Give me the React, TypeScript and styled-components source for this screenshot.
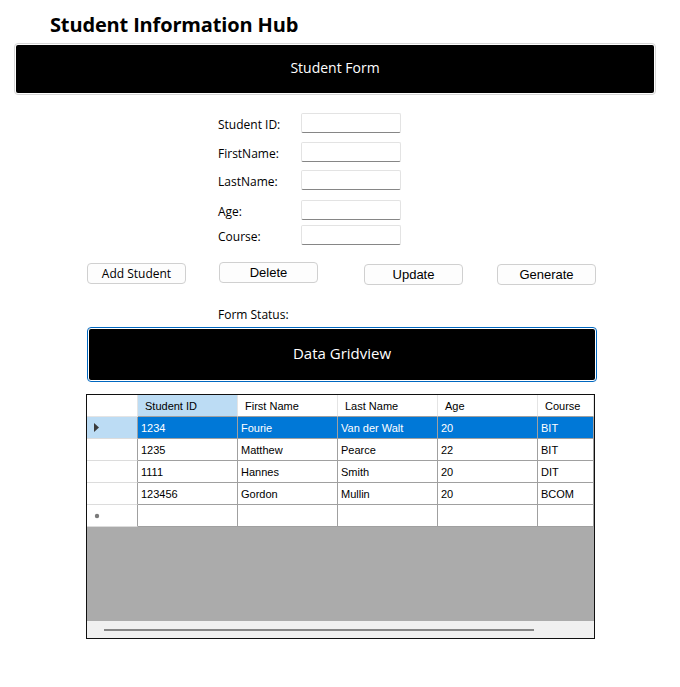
import React from "react";
import styled, { createGlobalStyle } from "styled-components";

const Global = createGlobalStyle`
  html, body { margin: 0; padding: 0; background: #ffffff; }
  body { font-family: "Open Sans", "Noto Sans", sans-serif; color: #000; }
  * { box-sizing: border-box; }
`;

const Page = styled.div`
  width: 680px;
  height: 687px;
  display: flex;
  flex-direction: column;
  align-items: flex-start;
`;

const Title = styled.h1`
  margin: 0 0 0 50px;
  height: 43px;
  padding-top: 13px;
  font-family: "Open Sans", "Noto Sans", sans-serif;
  font-weight: 700;
  font-size: 20px;
  line-height: 24px;
  letter-spacing: -0.15px;
  color: #000;
`;

const Banner = styled.div<{ $left: number; $top: number; $width: number; $height: number; $accent?: boolean }>`
  margin-left: ${(p) => p.$left}px;
  margin-top: ${(p) => p.$top}px;
  width: ${(p) => p.$width}px;
  height: ${(p) => p.$height}px;
  border: 1px solid ${(p) => (p.$accent ? "#0067c0" : "#d6d6d6")};
  border-radius: 4px;
  padding: 1px;
  background: #ffffff;
`;

const BannerInner = styled.div<{ $size: number }>`
  height: 100%;
  background: #000;
  border-radius: 2px;
  display: flex;
  align-items: center;
  justify-content: center;
  padding-bottom: 3px;
  color: #fff;
  font-family: "Open Sans", "Noto Sans", sans-serif;
  font-size: ${(p) => p.$size}px;
`;

const Fields = styled.div`
  margin-top: 17px;
  margin-left: 218px;
  display: flex;
  flex-direction: column;
`;

const FieldRow = styled.div<{ $gap: number }>`
  margin-top: ${(p) => p.$gap}px;
  display: grid;
  grid-template-columns: 83px 100px;
  align-items: center;
  height: 20px;
`;

const Label = styled.label`
  font-family: "Open Sans", "Noto Sans", sans-serif;
  font-size: 12px;
  line-height: 16px;
  padding-top: 5px;
  color: #000;
`;

const Input = styled.input`
  width: 100px;
  height: 20px;
  border: 1px solid #e3e3e3;
  border-bottom: 1px solid #868686;
  border-radius: 2px;
  background: #fff;
  outline: none;
  padding: 0 4px;
`;

const ButtonRow = styled.div`
  margin-top: 18px;
  margin-left: 87px;
  display: flex;
  align-items: flex-start;
  height: 23px;
`;

const Btn = styled.button<{ $gap: number; $dy: number; $arial?: boolean }>`
  margin-left: ${(p) => p.$gap}px;
  margin-top: ${(p) => p.$dy}px;
  width: 99px;
  height: 21px;
  border: 1px solid #d0d0d0;
  border-radius: 4px;
  background: #fdfdfd;
  color: #000;
  padding: 0;
  font-family: ${(p) => (p.$arial ? '"Liberation Sans", Arial, sans-serif' : '"Open Sans", "Noto Sans", sans-serif')};
  font-size: ${(p) => (p.$arial ? 13 : 12)}px;
  line-height: 19px;
`;

const Status = styled.div`
  margin-top: 22px;
  margin-left: 218px;
  height: 15px;
  font-family: "Open Sans", "Noto Sans", sans-serif;
  font-size: 12px;
  line-height: 15px;
`;

const GridWrap = styled.div`
  margin-top: 12px;
  margin-left: 86px;
  width: 509px;
  height: 245px;
  border: 1px solid #101010;
  display: flex;
  flex-direction: column;
  font-family: "Liberation Sans", Arial, sans-serif;
  font-size: 11px;
  overflow: hidden;
`;

const GridRow = styled.div`
  display: grid;
  grid-template-columns: 51px 100px 100px 100px 100px 1fr;
  height: 22px;
  flex: none;
`;

const HeadCell = styled.div<{ $selected?: boolean; $corner?: boolean }>`
  background: ${(p) => (p.$selected ? "#bcdcf4" : "#ffffff")};
  border-right: 1px solid #e4e4e4;
  border-bottom: 1px solid ${(p) => (p.$corner ? "#e4e4e4" : "#a0a0a0")};
  display: flex;
  align-items: center;
  padding-left: 7px;
  color: #000;
  white-space: nowrap;
`;

const RowHead = styled.div<{ $selected?: boolean }>`
  background: ${(p) => (p.$selected ? "#bcdcf4" : "#ffffff")};
  border-bottom: 1px solid #dcdcdc;
  border-right: 1px solid #a0a0a0;
  display: flex;
  align-items: center;
  padding-left: 7px;
`;

const Cell = styled.div<{ $selected?: boolean }>`
  background: ${(p) => (p.$selected ? "#0078d7" : "#ffffff")};
  color: ${(p) => (p.$selected ? "#ffffff" : "#000000")};
  border-right: 1px solid #a0a0a0;
  border-bottom: 1px solid #a0a0a0;
  display: flex;
  align-items: center;
  padding-left: 3px;
  white-space: nowrap;
  overflow: hidden;
`;

const Empty = styled.div`
  flex: 1;
  background: #ababab;
`;

const ScrollBar = styled.div`
  height: 17px;
  flex: none;
  background: #f0f0f0;
  display: flex;
  align-items: center;
  padding-left: 17px;
`;

const Thumb = styled.div`
  width: 430px;
  height: 2px;
  background: #858585;
  margin-top: 1px;
`;

const fields = [
  { label: "Student ID:", gap: 0 },
  { label: "FirstName:", gap: 9 },
  { label: "LastName:", gap: 8 },
  { label: "Age:", gap: 10 },
  { label: "Course:", gap: 5 },
];

const columns = ["Student ID", "First Name", "Last Name", "Age", "Course"];

const rows = [
  ["1234", "Fourie", "Van der Walt", "20", "BIT"],
  ["1235", "Matthew", "Pearce", "22", "BIT"],
  ["1111", "Hannes", "Smith", "20", "DIT"],
  ["123456", "Gordon", "Mullin", "20", "BCOM"],
];

const Arrow = () => (
  <svg width="6" height="9" viewBox="0 0 6 9">
    <polygon points="0,0 5,4.5 0,9" fill="#3a3a3a" />
  </svg>
);

const NewMark = () => (
  <svg width="6" height="6" viewBox="0 0 6 6">
    <circle cx="3" cy="3" r="2.2" fill="#7a7a7a" />
  </svg>
);

export default function App() {
  return (
    <Page>
      <Global />
      <Title>Student Information Hub</Title>
      <Banner $left={14} $top={0} $width={642} $height={52}>
        <BannerInner $size={14}>Student Form</BannerInner>
      </Banner>
      <Fields>
        {fields.map((f) => (
          <FieldRow key={f.label} $gap={f.gap}>
            <Label>{f.label}</Label>
            <Input />
          </FieldRow>
        ))}
      </Fields>
      <ButtonRow>
        <Btn $gap={0} $dy={1}>Add Student</Btn>
        <Btn $gap={33} $dy={0} $arial>Delete</Btn>
        <Btn $gap={46} $dy={2} $arial>Update</Btn>
        <Btn $gap={34} $dy={2} $arial>Generate</Btn>
      </ButtonRow>
      <Status>Form Status:</Status>
      <Banner $left={87} $top={5} $width={510} $height={55} $accent>
        <BannerInner $size={15}>Data Gridview</BannerInner>
      </Banner>
      <GridWrap>
        <GridRow>
          <HeadCell $corner />
          {columns.map((c, i) => (
            <HeadCell key={c} $selected={i === 0}>{c}</HeadCell>
          ))}
        </GridRow>
        {rows.map((r, ri) => (
          <GridRow key={r[0]}>
            <RowHead $selected={ri === 0}>{ri === 0 ? <Arrow /> : null}</RowHead>
            {r.map((v, ci) => (
              <Cell key={ci} $selected={ri === 0}>{v}</Cell>
            ))}
          </GridRow>
        ))}
        <GridRow>
          <RowHead><NewMark /></RowHead>
          {columns.map((c) => (
            <Cell key={c} />
          ))}
        </GridRow>
        <Empty />
        <ScrollBar>
          <Thumb />
        </ScrollBar>
      </GridWrap>
    </Page>
  );
}
